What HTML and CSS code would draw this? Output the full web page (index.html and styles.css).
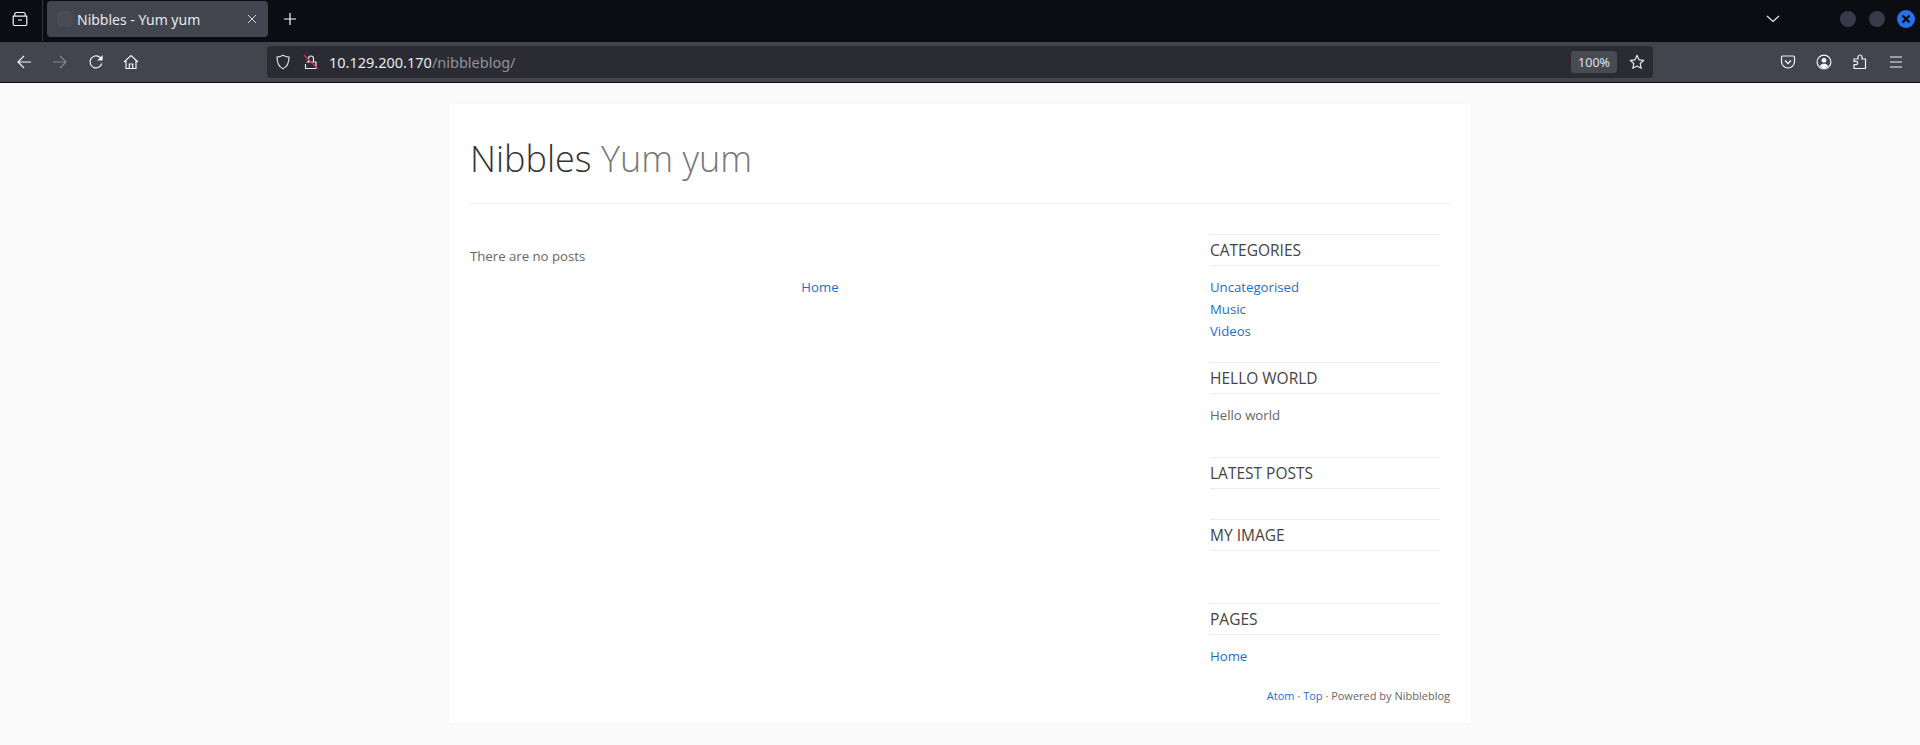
FILE: index.html
```html
<!DOCTYPE html>
<html lang="en">
<head>
<meta charset="utf-8">
<title>Nibbles - Yum yum</title>
<link rel="stylesheet" href="styles.css">
</head>
<body>
<header class="chrome">
  <div class="tabbar">
    <div class="tab-view">
      <svg class="ico" viewBox="0 0 16 16"><path d="M2.800 5V3.200a1.700 1.700 0 0 1 1.700-1.700h7a1.700 1.700 0 0 1 1.700 1.700V5M1.200 5.200h13.600v8.100a1.200 1.200 0 0 1-1.200 1.200H2.400a1.200 1.200 0 0 1-1.200-1.200zM6 9h4" fill="none" stroke="#f4f4f7" stroke-width="1.200"/></svg>
    </div>
    <div class="tab">
      <span class="favicon"></span>
      <span class="tab-title">Nibbles - Yum yum</span>
      <svg class="tab-close" viewBox="0 0 10 10"><path d="M1 1l8 8M9 1l-8 8" stroke="#d8d8dc" stroke-width="1" fill="none"/></svg>
    </div>
    <svg class="ico newtab" viewBox="0 0 16 16"><path d="M8 2v12M2 8h12" stroke="#fbfbfe" stroke-width="1.200" fill="none"/></svg>
    <div class="spacer"></div>
    <svg class="ico tablist" viewBox="0 0 16 16"><path d="M2 5l6 5.500L14 5" stroke="#e8e8ec" stroke-width="1.200" fill="none"/></svg>
    <div class="winbtns">
      <span class="dot"></span>
      <span class="dot"></span>
      <span class="dot close"><svg viewBox="0 0 18 18"><path d="M5.500 5.500l7 7M12.500 5.500l-7 7" stroke="#0b0d12" stroke-width="2.400" fill="none"/></svg></span>
    </div>
  </div>
  <div class="navbar">
    <svg class="ico nav-first" viewBox="0 0 16 16"><path d="M15 8H2M8 2L2 8l6 6" stroke="#f4f4f7" stroke-width="1.200" fill="none"/></svg>
    <svg class="ico nav" viewBox="0 0 16 16"><path d="M1 8h13M8 2l6 6-6 6" stroke="#85868b" stroke-width="1.200" fill="none"/></svg>
    <svg class="ico nav" viewBox="0 0 16 16"><path d="M13.800 9.500A6 6 0 1 1 11.500 3L14 5" stroke="#f4f4f7" stroke-width="1.200" fill="none"/><path d="M14.600 1v5.400H9.200z" fill="#f4f4f7"/></svg>
    <svg class="ico nav-home" viewBox="0 0 16 16"><path d="M1 8l7-6.500L15 8M3 6.500v8h10v-8M6.300 14.500V10h3.400v4.500" stroke="#f4f4f7" stroke-width="1.200" fill="none"/></svg>
    <div class="urlbar">
      <svg class="ico" viewBox="0 0 16 16"><path d="M8 1.200c2 1.200 4 1.700 6 1.900 0 5.500-1.500 9.700-6 11.700C3.500 12.800 2 8.600 2 3.100c2-.2 4-.7 6-1.900z" stroke="#dedee2" stroke-width="1.200" fill="none"/></svg>
      <svg class="ico lock" viewBox="0 0 16 16"><path d="M5.500 8V4.500a2.500 2.500 0 0 1 5 0V8M3.500 8h9.500v6.500H2.500V10" stroke="#e8e8ec" stroke-width="1.200" fill="none"/><path d="M1 1l14 14" stroke="#e22850" stroke-width="1.300"/></svg>
      <span class="url"><span class="host">10.129.200.170</span><span class="path">/nibbleblog/</span></span>
      <div class="spacer"></div>
      <span class="zoom">100%</span>
      <svg class="ico" viewBox="0 0 16 16"><path d="M8 1.300l2 4.500 4.800.5-3.600 3.200 1 4.800L8 12l-4.200 2.300 1-4.800L1.200 6.300 6 5.800z" stroke="#e8e8ec" stroke-width="1.200" fill="none" stroke-linejoin="round"/></svg>
    </div>
    <div class="spacer"></div>
    <svg class="ico tool" viewBox="0 0 16 16"><path d="M2.800 2h10.400a1.300 1.300 0 0 1 1.300 1.300v4.200a6.500 6.500 0 0 1-13 0V3.300A1.300 1.300 0 0 1 2.800 2z" stroke="#f4f4f7" stroke-width="1.200" fill="none"/><path d="M5 6.500l3 3 3-3" stroke="#f4f4f7" stroke-width="1.300" fill="none"/></svg>
    <svg class="ico tool" viewBox="0 0 16 16"><circle cx="8" cy="8" r="6.900" stroke="#f4f4f7" stroke-width="1.200" fill="none"/><circle cx="8" cy="6.300" r="2.400" fill="#f4f4f7"/><path d="M3.700 12.300c1-2 2.500-2.600 4.300-2.600s3.300.6 4.300 2.600C11 13.600 9.500 14.200 8 14.200s-3-.6-4.300-1.900z" fill="#f4f4f7"/></svg>
    <svg class="ico tool" viewBox="0 0 16 16"><path d="M2 5h4V3a2 2 0 0 1 4 0v2h3.500v9.500H2v-3.800h2a1.700 1.700 0 0 0 0-3.400H2z" stroke="#f4f4f7" stroke-width="1.200" fill="none"/></svg>
    <svg class="ico tool" viewBox="0 0 16 16"><path d="M2 3h12M2 8h12M2 13h12" stroke="#f4f4f7" stroke-width="1.200" fill="none"/></svg>
  </div>
</header>
<main class="page">
  <div class="container">
    <header class="site-head">
      <h1 class="site-title">Nibbles <span class="slogan">Yum yum</span></h1>
    </header>
    <div class="columns">
      <section class="content">
        <p class="no-posts">There are no posts</p>
        <p class="pager"><a href="#">Home</a></p>
      </section>
      <aside class="sidebar">
        <div class="widget widget-list">
          <h3>CATEGORIES</h3>
          <ul>
            <li><a href="#">Uncategorised</a></li>
            <li><a href="#">Music</a></li>
            <li><a href="#">Videos</a></li>
          </ul>
        </div>
        <div class="widget widget-text">
          <h3>HELLO WORLD</h3>
          <p>Hello world</p>
        </div>
        <div class="widget widget-latest">
          <h3>LATEST POSTS</h3>
        </div>
        <div class="widget widget-image">
          <h3>MY IMAGE</h3>
        </div>
        <div class="widget widget-pages">
          <h3>PAGES</h3>
          <ul>
            <li><a href="#">Home</a></li>
          </ul>
        </div>
      </aside>
    </div>
    <footer class="site-foot"><a href="#">Atom</a> · <a href="#">Top</a> · Powered by Nibbleblog</footer>
  </div>
</main>
</body>
</html>
```
FILE: styles.css
```css
* { box-sizing: border-box; }
html, body { margin: 0; padding: 0; height: 100%; overflow: hidden; }
body { display: flex; flex-direction: column; background: #fafafa; font-family: "Open Sans", sans-serif; }

.chrome { flex: none; font-family: "Noto Sans", sans-serif; }
.tabbar { height: 42px; background: #0c0d13; display: flex; align-items: center; padding-bottom: 4px; }
.ico { width: 16px; height: 16px; flex: none; display: block; }
.tab-view { width: 43px; height: 41px; align-self: flex-start; display: flex; align-items: center; justify-content: center; border-right: 1px solid #33343a; margin-right: 4px; padding: 0 3px 3px 0; }
.tab { width: 221px; height: 36px; border-radius: 4px; background: #42454e; display: flex; align-items: center; padding: 0 11px 0 10px; }
.favicon { width: 16px; height: 16px; border-radius: 5px; background: #4a4c55; flex: none; margin-right: 4px; }
.tab-title { flex: 1; font-size: 14px; color: #e8e8ec; white-space: nowrap; }
.tab-close { width: 10px; height: 10px; flex: none; }
.newtab { margin-left: 14px; }
.spacer { flex: 1; }
.tablist { margin-right: 59px; }
.winbtns { display: flex; gap: 13px; margin-right: 5px; align-items: center; }
.dot { width: 16px; height: 16px; border-radius: 50%; background: #373a48; display: block; }
.dot.close { width: 18px; height: 18px; margin-left: -1px; background: #2672ec; }
.dot.close svg { display: block; width: 18px; height: 18px; }

.navbar { height: 41px; background: #42454e; border-bottom: 1px solid #0c0d13; display: flex; align-items: center; }
.nav-first { margin-left: 16px; }
.nav { margin-left: 20px; }
.nav-home { margin-left: 19px; }
.urlbar { margin-left: 128px; width: 1386px; height: 32px; border-radius: 4px; background: #2b2c33; display: flex; align-items: center; padding: 0 8px; }
.lock { margin-left: 12px; }
.url { margin-left: 10px; font-size: 14.500px; white-space: nowrap; }
.host { color: #e8e8ec; }
.path { color: #92939a; }
.zoom { width: 46px; height: 22px; border-radius: 3px; background: #494b53; color: #e0e0e4; font-size: 12.500px; display: flex; align-items: center; justify-content: center; margin-right: 12px; }
.tool { margin-left: 20px; }
.tool:last-child { margin-right: 16px; }

.page { flex: 1; min-height: 0; padding-top: 21px; }
.container { width: 1020px; margin: 0 auto; background: #fff; padding: 0 20px; height: 619px; box-shadow: 0 0 1px rgba(0,0,0,.06); color: #666; font-size: 13.200px; line-height: 22px; }
.site-head { height: 100px; border-bottom: 1px solid #eee; display: flex; align-items: flex-end; padding-bottom: 18px; }
.site-title { margin: 0; font-size: 36px; line-height: 52px; font-weight: 300; color: #333; }
.slogan { color: #777; }
.columns { display: flex; }
.content { width: 700px; margin-right: 40px; padding-top: 41px; }
.no-posts { margin: 0; height: 31px; line-height: 22px; }
.pager { margin: 0; text-align: center; }
a { color: #1b70c9; text-decoration: none; }
.sidebar { width: 230px; padding-top: 30px; }
.widget h3 { margin: 0; height: 32px; border-top: 1px solid #eee; border-bottom: 1px solid #eee; font-size: 15.500px; font-weight: 400; color: #444; line-height: 30px; }
.widget ul { list-style: none; margin: 0; padding: 10px 0 0; }
.widget li { height: 22px; line-height: 22px; }
.widget p { margin: 0; padding-top: 10px; }
.widget-list { height: 128px; }
.widget-text { height: 95px; }
.widget-latest { height: 62px; }
.widget-image { height: 84px; }
.widget-pages { height: 67px; }
.site-foot { text-align: right; font-size: 11px; line-height: 16px; margin-top: 18px; }
```
